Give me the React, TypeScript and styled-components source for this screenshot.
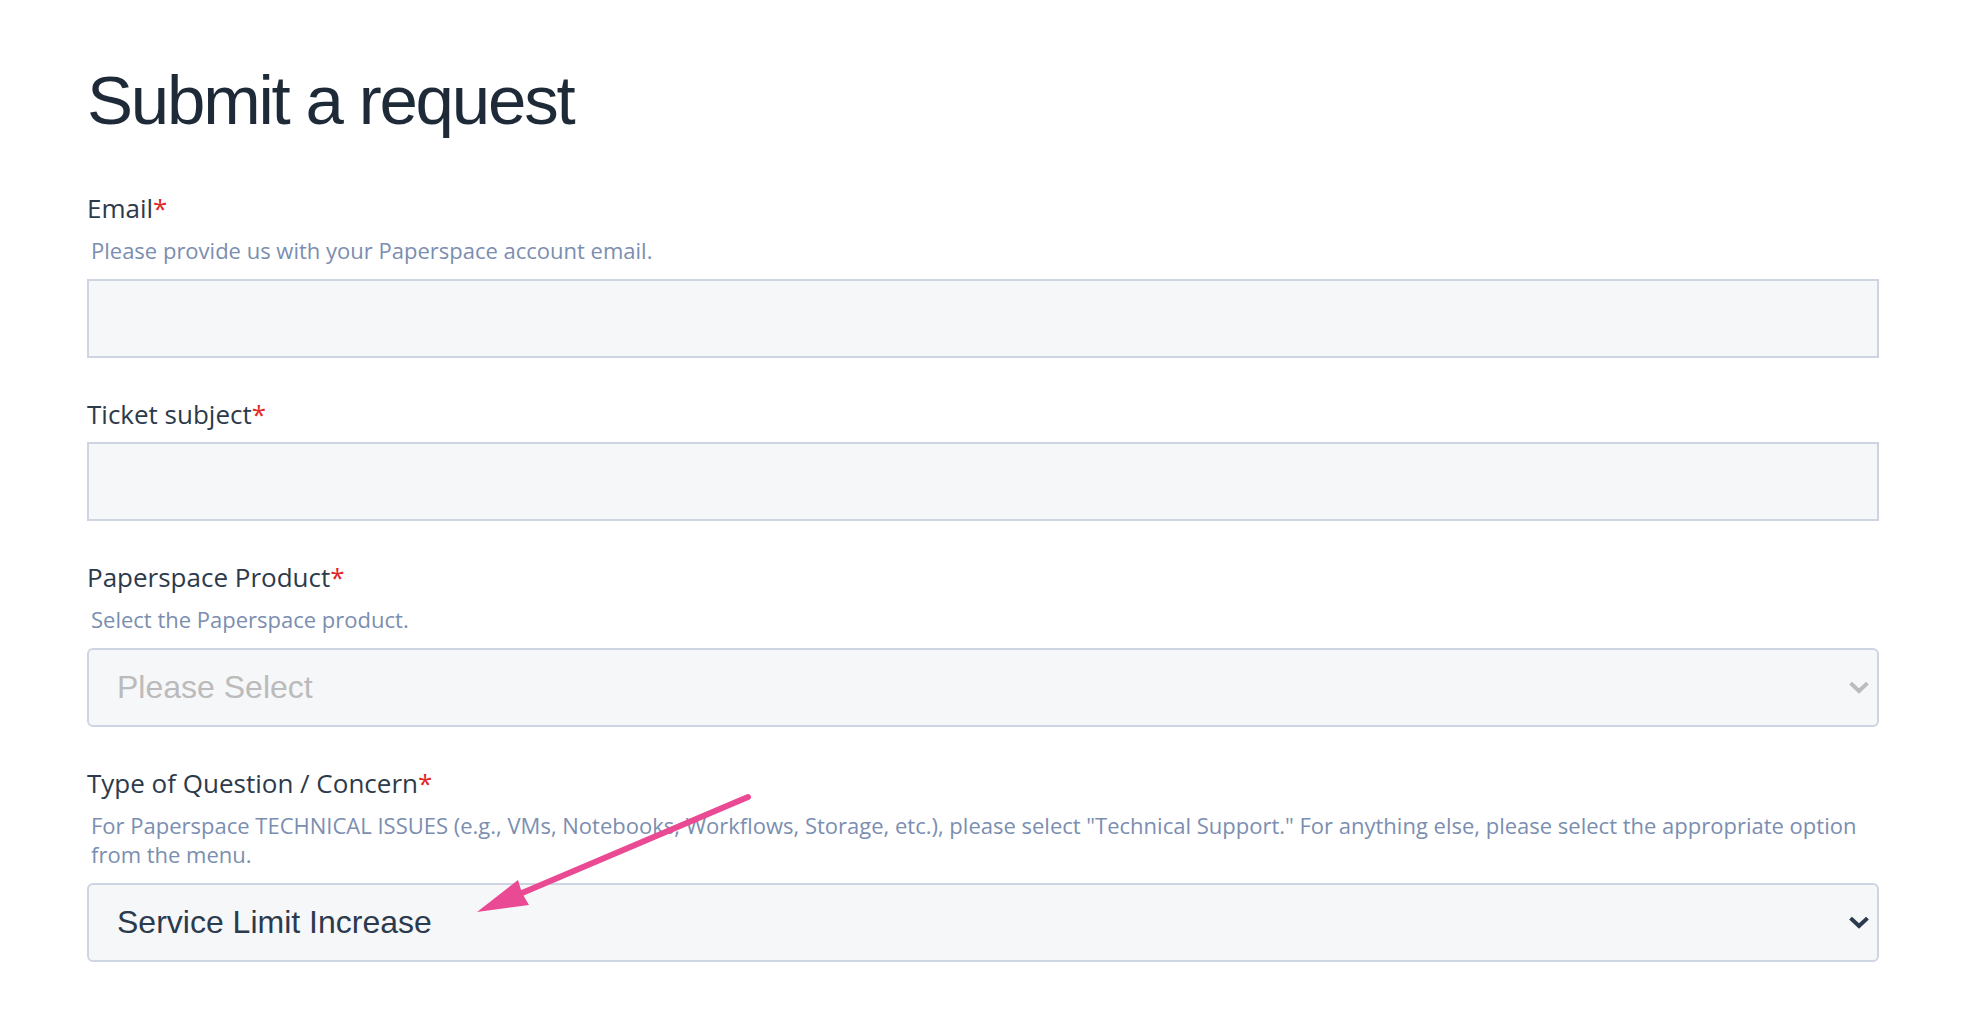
import React from 'react';
import styled, { createGlobalStyle } from 'styled-components';

const GlobalStyle = createGlobalStyle`
  html, body {
    margin: 0;
    padding: 0;
    background: #ffffff;
  }

  body {
    font-family: 'Open Sans', 'Noto Sans', sans-serif;
  }
`;

const Page = styled.div`
  position: relative;
  width: 1968px;
  min-height: 1016px;
  box-sizing: border-box;
  padding: 61px 89px 0 87px;
  overflow: hidden;
`;

const Title = styled.h1`
  margin: 0 0 50px;
  font-family: 'Liberation Sans', Arial, sans-serif;
  font-size: 69px;
  font-weight: 400;
  line-height: 79px;
  letter-spacing: -2.2px;
  color: #1e2a37;
`;

const Form = styled.form`
  display: flex;
  flex-direction: column;
  gap: 38px;
`;

const Field = styled.div`
  display: flex;
  flex-direction: column;
`;

const Label = styled.label`
  margin-bottom: 10px;
  font-size: 26px;
  line-height: 36px;
  color: #2d3a4b;
`;

const Required = styled.span`
  color: #e3261f;
`;

const Hint = styled.p`
  margin: 0 0 14px;
  padding-left: 4px;
  font-size: 22px;
  line-height: 29px;
  color: #7b8eb0;
`;

const TextInput = styled.input`
  box-sizing: border-box;
  width: 100%;
  height: 79px;
  margin: 0;
  border: 2px solid #cdd5e2;
  border-radius: 0;
  background: #f6f7f9;
  outline: none;
`;

const SelectBox = styled.div<{ $placeholder?: boolean }>`
  box-sizing: border-box;
  display: flex;
  align-items: center;
  justify-content: space-between;
  height: 79px;
  padding: 0 8px 0 28px;
  border: 2px solid #cdd5e2;
  border-radius: 6px;
  background: #f6f7f9;
  font-family: 'Liberation Sans', Arial, sans-serif;
  font-size: 32px;
  color: ${({ $placeholder }) => ($placeholder ? '#bbbbbb' : '#2c3a4d')};
`;

const Chevron = styled.svg<{ $muted?: boolean }>`
  width: 20px;
  height: 14px;
  color: ${({ $muted }) => ($muted ? '#bcbcbc' : '#2c3a4d')};
`;

const Annotation = styled.svg`
  position: absolute;
  top: 0;
  left: 0;
  width: 1968px;
  height: 1016px;
  pointer-events: none;
`;

interface SelectProps {
  value: string;
  placeholder?: boolean;
}

function FakeSelect ({ value, placeholder }: SelectProps): React.ReactElement {
  return (
    <SelectBox $placeholder={placeholder} role='combobox'>
      <span>{value}</span>
      <Chevron $muted={placeholder} viewBox='0 0 20 14'>
        <path
          d='M3 3.5 L10 10 L17 3.5'
          fill='none'
          stroke='currentColor'
          strokeLinecap='square'
          strokeWidth='4'
        />
      </Chevron>
    </SelectBox>
  );
}

export default function App (): React.ReactElement {
  return (
    <>
      <GlobalStyle />
      <Page>
        <Title>Submit a request</Title>
        <Form>
          <Field>
            <Label>Email<Required>*</Required></Label>
            <Hint>Please provide us with your Paperspace account email.</Hint>
            <TextInput type='email' />
          </Field>

          <Field>
            <Label>Ticket subject<Required>*</Required></Label>
            <TextInput type='text' />
          </Field>

          <Field>
            <Label>Paperspace Product<Required>*</Required></Label>
            <Hint>Select the Paperspace product.</Hint>
            <FakeSelect placeholder value='Please Select' />
          </Field>

          <Field>
            <Label>Type of Question / Concern<Required>*</Required></Label>
            <Hint>
              For Paperspace TECHNICAL ISSUES (e.g., VMs, Notebooks, Workflows, Storage, etc.), please select &quot;Technical Support.&quot; For anything else, please select the appropriate option from the menu.
            </Hint>
            <FakeSelect value='Service Limit Increase' />
          </Field>
        </Form>

        <Annotation viewBox='0 0 1968 1016'>
          <line
            stroke='#ea4a93'
            strokeLinecap='round'
            strokeWidth='6'
            x1='748'
            x2='522'
            y1='797'
            y2='893'
          />
          <polygon
            fill='#ea4a93'
            points='477,912 518,880 522,893 529,905'
          />
        </Annotation>
      </Page>
    </>
  );
}
